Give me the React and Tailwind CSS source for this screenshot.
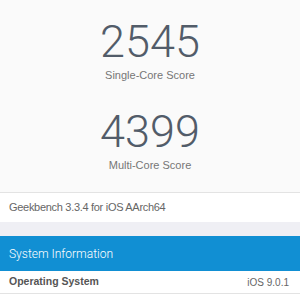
import React from 'react';

const Score = ({ value, label }) => {
    return (
        <div className="flex flex-col items-center">
            <div className="h-[44px] text-[45px] leading-[44px] font-light text-[#525c69] font-['Roboto',sans-serif]">{value}</div>
            <div className="mt-1 h-[14px] text-[11px] leading-[14px] text-[#767676]">{label}</div>
        </div>
    );
};

function App() {
    return (
        <div className="w-[300px] h-[300px] overflow-hidden bg-white font-['Liberation_Sans',Arial,sans-serif]">
            <div className="flex flex-col gap-7 pt-5 pb-5 bg-[#fafafa] border-b border-[#e3e3e3]">
                <Score value="2545" label="Single-Core Score" />
                <Score value="4399" label="Multi-Core Score" />
            </div>
            <div className="h-[29px] flex items-center pl-[9px] pr-2 text-[11px] tracking-[-0.3px] text-[#666] bg-white">
                Geekbench 3.3.4 for iOS AArch64
            </div>
            <div className="h-[14px] bg-[#efeff4]"></div>
            <div className="h-[35px] flex items-center pl-[9px] pr-2 bg-[#118fd3] text-white text-[12px] font-['Roboto',sans-serif] font-light">
                System Information
            </div>
            <div className="h-[23px] flex items-center justify-between pl-[9px] pr-[11px] border-b border-[#e3e3e3] bg-white">
                <span className="text-[10.5px] font-bold text-[#555]">Operating System</span>
                <span className="text-[10px] text-[#666]">iOS 9.0.1</span>
            </div>
        </div>
    );
}

export default App;
